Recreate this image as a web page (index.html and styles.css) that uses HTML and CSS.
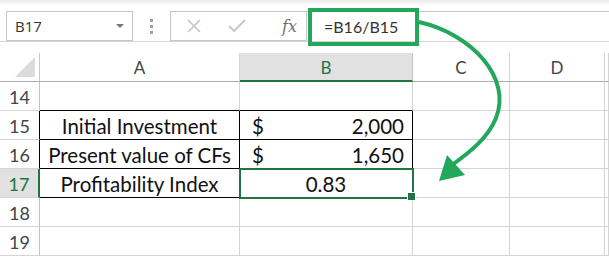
FILE: index.html
```html
<!DOCTYPE html>
<html>
<head>
  <title>Profitability Index</title>
  <link rel="stylesheet" href="styles.css">
</head>
<body>
  <div class="sheet">
    <div class="topbar">
      <div class="namebox">
        <span>B17</span>
        <span class="caret"></span>
      </div>
      <div class="grip"><i></i><i></i><i></i></div>
      <div class="tools">
        <svg width="16" height="14" viewBox="0 0 16 14"><path d="M2 1 L14 13 M14 1 L2 13" stroke="#c4c4c4" stroke-width="1.6" fill="none"/></svg>
        <svg width="18" height="14" viewBox="0 0 18 14"><path d="M1 7 L6 12 L17 1" stroke="#c8c8c8" stroke-width="2" fill="none"/></svg>
        <span class="fx">fx</span>
      </div>
      <div class="formula">
        <span class="formula-text">=B16/B15</span>
      </div>
    </div>

    <div class="grid">
      <div class="corner"><span></span></div>
      <div class="colhead">A</div>
      <div class="colhead active">B</div>
      <div class="colhead">C</div>
      <div class="colhead">D</div>
      <div class="colhead last"></div>

      <div class="rowhead">14</div>
      <div class="cell top-edge"></div>
      <div class="cell top-edge"></div>
      <div class="cell"></div>
      <div class="cell"></div>
      <div class="cell last"></div>

      <div class="rowhead boxed">15</div>
      <div class="cell boxed center">Initial Investment</div>
      <div class="cell boxed money"><span>$</span><span>2,000</span></div>
      <div class="cell"></div>
      <div class="cell"></div>
      <div class="cell last"></div>

      <div class="rowhead boxed">16</div>
      <div class="cell boxed center">Present value of CFs</div>
      <div class="cell boxed money"><span>$</span><span>1,650</span></div>
      <div class="cell"></div>
      <div class="cell"></div>
      <div class="cell last"></div>

      <div class="rowhead active">17</div>
      <div class="cell boxed center">Profitability Index</div>
      <div class="cell boxed center selected">0.83</div>
      <div class="cell"></div>
      <div class="cell"></div>
      <div class="cell last"></div>

      <div class="rowhead">18</div>
      <div class="cell"></div>
      <div class="cell"></div>
      <div class="cell"></div>
      <div class="cell"></div>
      <div class="cell last"></div>

      <div class="rowhead">19</div>
      <div class="cell"></div>
      <div class="cell"></div>
      <div class="cell"></div>
      <div class="cell"></div>
      <div class="cell last"></div>
    </div>

    <svg class="arrow" width="609" height="259" viewBox="0 0 609 259">
      <path d="M419 22 C472 34 512 78 496 118 C488 138 470 152 452 165" stroke="#23a75b" stroke-width="4" fill="none"/>
      <polygon points="439,181 447,155 465,175" fill="#23a75b"/>
    </svg>
  </div>
</body>
</html>
```

FILE: styles.css
```css
* {
  box-sizing: border-box;
}

body {
  margin: 0;
  background-color: #fff;
  font-family: Lato, "Open Sans", sans-serif;
}

.sheet {
  position: relative;
  width: 609px;
  height: 259px;
  overflow: hidden;
}

/* formula bar */
.topbar {
  height: 42px;
  display: flex;
  align-items: flex-start;
  padding: 11px 0 0 6px;
  border-bottom: 1px solid #d6d6d6;
  background: linear-gradient(#e9e9e9 0, #ffffff 5px);
}

.namebox {
  width: 127px;
  height: 30px;
  border: 1px solid #c6c6c6;
  display: flex;
  align-items: center;
  justify-content: space-between;
  padding: 0 8px 0 8px;
  font-family: "Open Sans", sans-serif;
  font-size: 15px;
  color: #333;
}

.caret {
  width: 0;
  height: 0;
  border-left: 4px solid transparent;
  border-right: 4px solid transparent;
  border-top: 4px solid #777;
}

.grip {
  width: 37px;
  height: 30px;
  display: flex;
  flex-direction: column;
  align-items: center;
  justify-content: center;
  gap: 3px;
}

.grip i {
  width: 3px;
  height: 3px;
  background-color: #a0a0a0;
}

.tools {
  width: 137px;
  height: 30px;
  border: 1px solid #c6c6c6;
  display: flex;
  align-items: center;
  padding-left: 15px;
  gap: 26px;
}

.fx {
  font-family: "DejaVu Serif", serif;
  font-style: italic;
  font-size: 16px;
  color: #6f6f6f;
  margin-left: 10px;
}

.formula {
  flex: 1;
  height: 30px;
  border-top: 1px solid #c6c6c6;
  border-left: 1px solid #c6c6c6;
  margin-left: -1px;
  display: flex;
  align-items: center;
}

.formula-text {
  margin: -7px 0 -7px 1px;
  width: 111px;
  height: 38px;
  border: 4px solid #23a75b;
  padding-left: 12px;
  display: flex;
  align-items: center;
  font-size: 16px;
  color: #333;
}

/* cells */
.grid {
  margin-top: 11px;
  display: grid;
  grid-template-columns: 40px 200px 173px 97px 95px 1fr;
  grid-auto-rows: 29px;
}

.grid > div {
  border-right: 1px solid #d4d4d4;
  border-bottom: 1px solid #d4d4d4;
  display: flex;
  align-items: center;
  justify-content: center;
}

.corner {
  position: relative;
  border-right-color: #c8c8c8 !important;
  border-bottom-color: #ababab !important;
}

.corner span {
  position: absolute;
  right: 4px;
  bottom: 4px;
  width: 0;
  height: 0;
  border-left: 20px solid transparent;
  border-bottom: 20px solid #dcdcdc;
}

.colhead {
  font-size: 17px;
  color: #444;
  border-bottom-color: #ababab !important;
  padding-top: 1px;
}

.colhead.active {
  background-color: #e1e1e1;
  color: #217346;
  border-bottom: 2px solid #217346 !important;
  border-right-color: #c0c0c0 !important;
}

.rowhead {
  font-size: 18px;
  color: #444;
  border-right-color: #c0c0c0 !important;
  padding-top: 1px;
}

.rowhead.boxed {
  border-right-color: #000 !important;
}

.rowhead.active {
  background-color: #e1e1e1;
  color: #217346;
  border-right: 2px solid #217346 !important;
}

.cell {
  font-size: 20.5px;
  color: #111;
  padding-top: 1px;
}

.cell.top-edge {
  border-bottom-color: #000 !important;
}

.cell.boxed {
  border-right-color: #000 !important;
  border-bottom-color: #000 !important;
}

.money {
  justify-content: space-between !important;
  padding: 1px 8px 0 12px;
}

.selected {
  position: relative;
  outline: 2px solid #217346;
  outline-offset: -1px;
  z-index: 1;
}

.selected::after {
  content: "";
  position: absolute;
  right: -4px;
  bottom: -4px;
  width: 7px;
  height: 7px;
  background-color: #217346;
  border: 1px solid #fff;
}

.arrow {
  position: absolute;
  left: 0;
  top: 0;
  pointer-events: none;
}
```
